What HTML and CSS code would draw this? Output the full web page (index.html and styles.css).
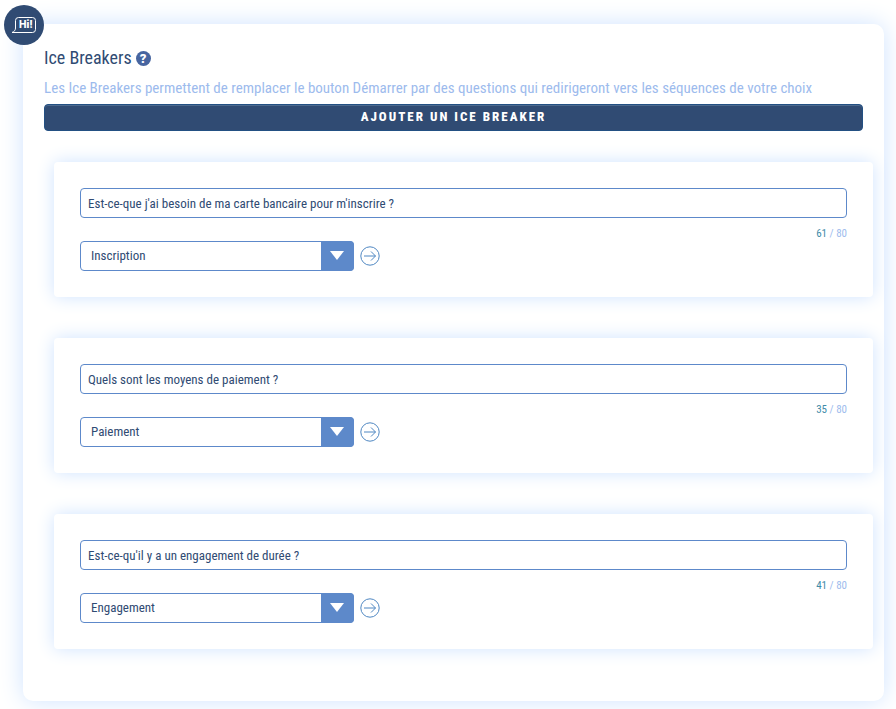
FILE: index.html
```html
<!DOCTYPE html>
<html lang="fr">
<head>
  <meta charset="UTF-8" />
  <meta name="viewport" content="width=device-width, initial-scale=1" />
  <title>Ice Breakers</title>
  <link rel="stylesheet" href="styles.css">
</head>
<body>

  <section class="panel">
    <div class="badge">
      <svg width="26" height="18" viewBox="0 0 26 18">
        <path d="M1 16.500C3.500 15.500 4.500 14 4.500 12V4.500Q4.500 1.500 7.500 1.500H21.500Q24.500 1.500 24.500 4.500V13.500Q24.500 16.500 21.500 16.500Z" fill="none" stroke="#fff" stroke-width="1" />
        <text x="15" y="12" text-anchor="middle">Hi!</text>
      </svg>
    </div>

    <h1>Ice Breakers
      <button class="help" type="button" aria-label="Aide">?</button>
    </h1>
    <p class="intro">Les Ice Breakers permettent de remplacer le bouton Démarrer par des questions qui redirigeront vers les séquences de votre choix</p>
    <button class="add" type="button">Ajouter un ice breaker</button>

    <div class="cards">
      <div class="card">
        <input class="question" type="text" aria-label="Question 1" value="Est-ce-que j'ai besoin de ma carte bancaire pour m'inscrire ?" maxlength="80" />
        <div class="counter"><span class="count">61</span> / 80</div>
        <div class="sequence">
          <div class="select">
            <select aria-label="Séquence 1"><option>Inscription</option></select>
            <span class="arrow"></span>
          </div>
          <a class="go" href="#" aria-label="Ouvrir la séquence">
            <svg width="20" height="20" viewBox="0 0 20 20"><circle cx="10" cy="10" r="9.200" /><path d="M4 10H15.500M11 5.500L15.500 10L11 14.500" /></svg>
          </a>
        </div>
      </div>

      <div class="card">
        <input class="question" type="text" aria-label="Question 2" value="Quels sont les moyens de paiement ?" maxlength="80" />
        <div class="counter"><span class="count">35</span> / 80</div>
        <div class="sequence">
          <div class="select">
            <select aria-label="Séquence 2"><option>Paiement</option></select>
            <span class="arrow"></span>
          </div>
          <a class="go" href="#" aria-label="Ouvrir la séquence">
            <svg width="20" height="20" viewBox="0 0 20 20"><circle cx="10" cy="10" r="9.200" /><path d="M4 10H15.500M11 5.500L15.500 10L11 14.500" /></svg>
          </a>
        </div>
      </div>

      <div class="card">
        <input class="question" type="text" aria-label="Question 3" value="Est-ce-qu'il y a un engagement de durée ?" maxlength="80" />
        <div class="counter"><span class="count">41</span> / 80</div>
        <div class="sequence">
          <div class="select">
            <select aria-label="Séquence 3"><option>Engagement</option></select>
            <span class="arrow"></span>
          </div>
          <a class="go" href="#" aria-label="Ouvrir la séquence">
            <svg width="20" height="20" viewBox="0 0 20 20"><circle cx="10" cy="10" r="9.200" /><path d="M4 10H15.500M11 5.500L15.500 10L11 14.500" /></svg>
          </a>
        </div>
      </div>
    </div>
  </section>

</body>
</html>
```
FILE: styles.css
```css
* {
  box-sizing: border-box;
}
body {
  margin: 0;
  padding: 24px 12px 8px 23px;
  background: #fff;
  color: #304b73;
  font-family: "Roboto Condensed", "Liberation Sans Narrow", Roboto, sans-serif;
}
button, input, select {
  font-family: inherit;
  color: inherit;
}
.panel {
  position: relative;
  padding: 21px 21px 52px;
  border-radius: 10px;
  background: #fff;
  box-shadow: 0 0 24px #cfe3ff;
}
.badge {
  position: absolute;
  top: -19px;
  left: -19px;
  width: 40px;
  height: 40px;
  display: flex;
  align-items: center;
  justify-content: center;
  border-radius: 50%;
  background: #304b73;
}
.badge text {
  fill: #fff;
  font-family: Inter, sans-serif;
  font-size: 10px;
  font-weight: 800;
}
h1 {
  display: flex;
  align-items: center;
  gap: 4px;
  margin: 0;
  font-size: 18px;
  font-weight: 400;
  line-height: 26px;
}
.help {
  width: 15px;
  height: 15px;
  padding: 0;
  border: none;
  border-radius: 50%;
  background: #4765a0;
  color: #fff;
  font-family: Roboto, sans-serif;
  font-size: 13px;
  font-weight: 900;
  line-height: 15px;
}
.intro {
  margin: 5px 0 3px;
  color: #9dbbed;
  font-size: 15px;
  line-height: 25px;
}
.add {
  display: block;
  width: 100%;
  height: 27px;
  padding: 0 0 2px;
  border: 1px solid #235083;
  border-radius: 4px;
  background: #304b73;
  box-shadow: inset 0 1px 0 #4d6a8e;
  color: #fff;
  font-size: 13px;
  font-weight: 800;
  letter-spacing: 2px;
  text-transform: uppercase;
}
.cards {
  display: flex;
  flex-direction: column;
  gap: 41px;
  margin: 31px -10px 0 10px;
}
.card {
  padding: 26px;
  border-radius: 4px;
  background: #fff;
  box-shadow: 0 0 18px #cfe3ff;
}
.question {
  display: block;
  width: 100%;
  height: 30px;
  padding: 0 7px;
  border: 1px solid #5d89ca;
  border-radius: 4px;
  background: #fff;
  font-size: 13px;
}
.counter {
  padding-top: 8px;
  color: #9dbbed;
  font-size: 11px;
  line-height: 15px;
  text-align: right;
}
.count {
  color: #3e8ba8;
}
.sequence {
  display: flex;
  align-items: center;
  gap: 6px;
}
.select {
  position: relative;
  width: 274px;
}
.select select {
  display: block;
  width: 100%;
  height: 30px;
  padding: 0 40px 1px 10px;
  border: 1px solid #5d89ca;
  border-radius: 4px;
  background: #fff;
  font-size: 13px;
  appearance: none;
}
.arrow {
  position: absolute;
  top: 0;
  right: 0;
  bottom: 0;
  width: 33px;
  display: flex;
  align-items: center;
  justify-content: center;
  padding: 0 2px 2px 0;
  border-radius: 0 4px 4px 0;
  background: #5d89ca;
  pointer-events: none;
}
.arrow::after {
  content: "";
  border: 7px solid transparent;
  border-top: 9px solid #fff;
  border-bottom: 0;
}
.go svg {
  display: block;
  fill: none;
  stroke: #4f87c2;
  stroke-width: 1;
}
```
